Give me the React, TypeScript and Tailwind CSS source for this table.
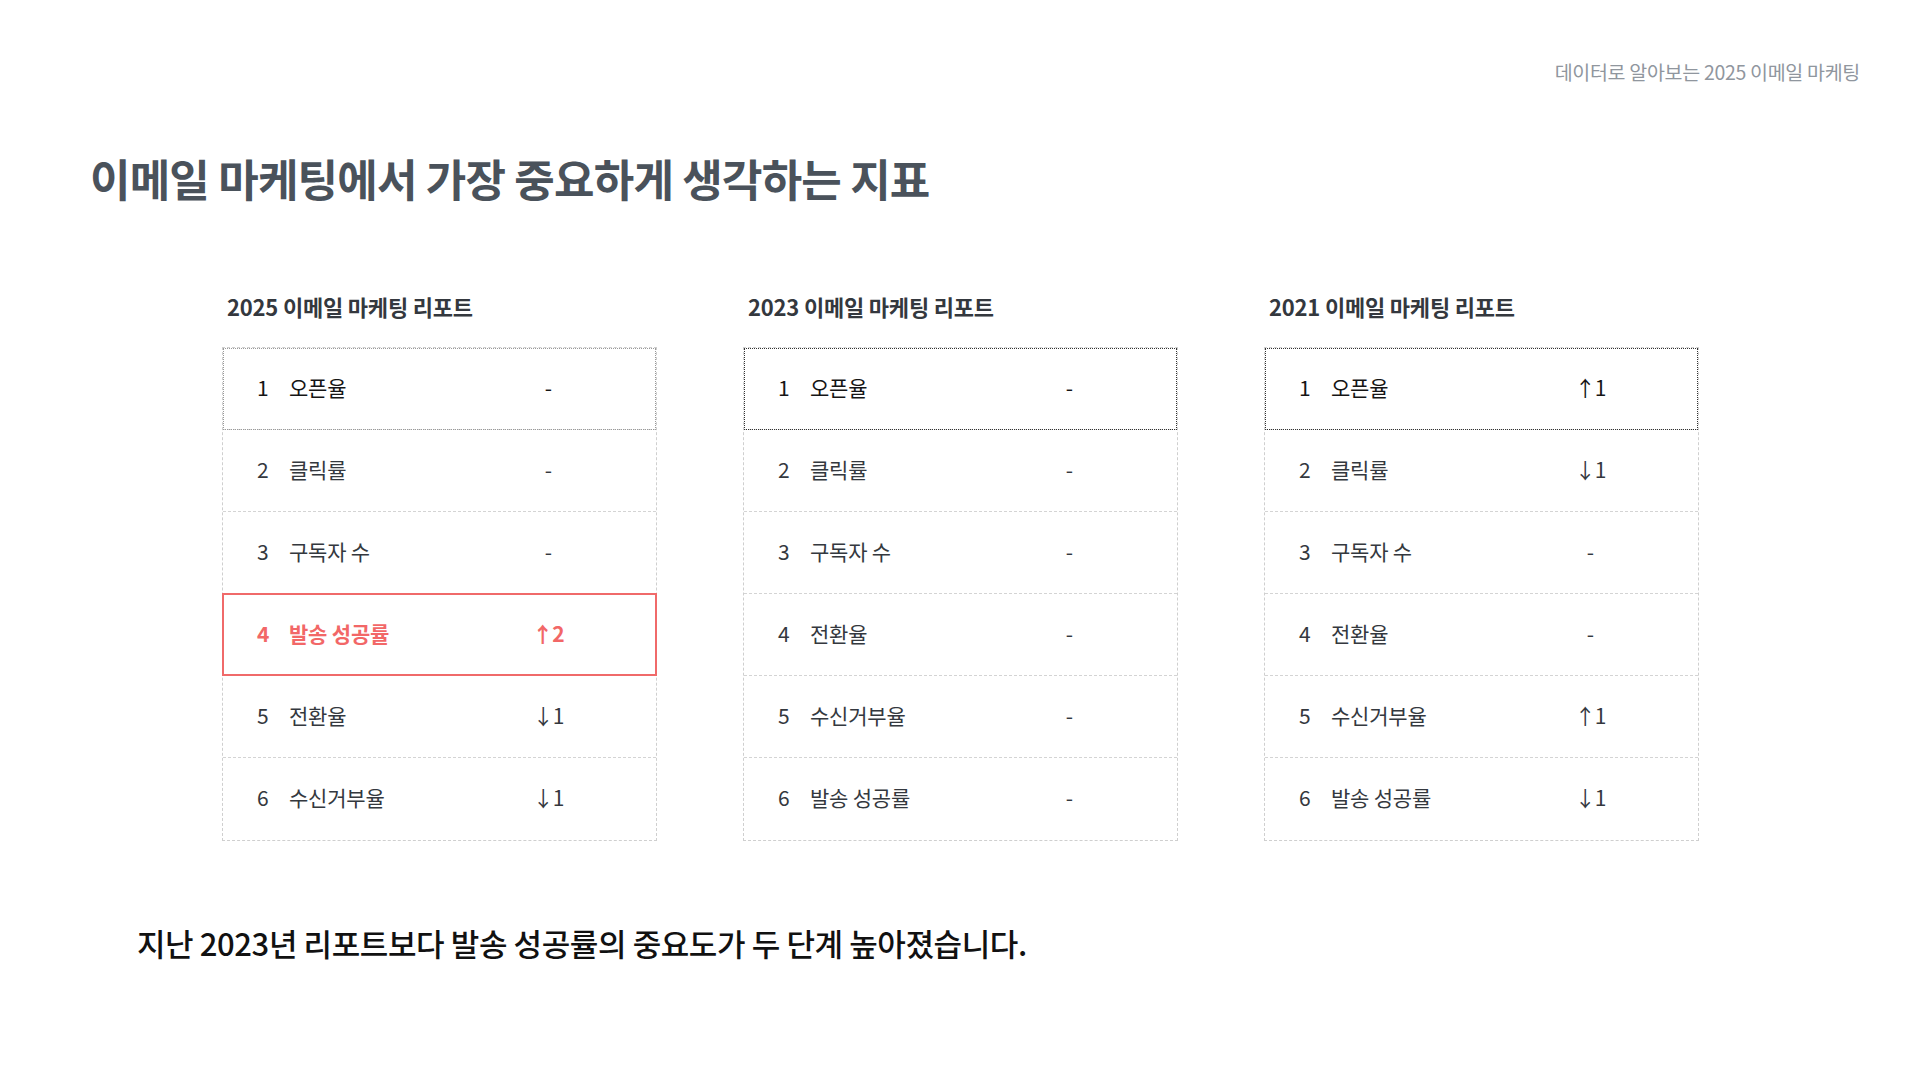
import React from "react";

type Row = { n: number; label: string; trend: string; hl?: boolean };

const tables: { title: string; firstOutline: string; rows: Row[] }[] = [
  {
    title: "2025 이메일 마케팅 리포트",
    firstOutline: "outline-[#9a9a9a]",
    rows: [
      { n: 1, label: "오픈율", trend: "-" },
      { n: 2, label: "클릭률", trend: "-" },
      { n: 3, label: "구독자 수", trend: "-" },
      { n: 4, label: "발송 성공률", trend: "↑2", hl: true },
      { n: 5, label: "전환율", trend: "↓1" },
      { n: 6, label: "수신거부율", trend: "↓1" },
    ],
  },
  {
    title: "2023 이메일 마케팅 리포트",
    firstOutline: "outline-[#333333]",
    rows: [
      { n: 1, label: "오픈율", trend: "-" },
      { n: 2, label: "클릭률", trend: "-" },
      { n: 3, label: "구독자 수", trend: "-" },
      { n: 4, label: "전환율", trend: "-" },
      { n: 5, label: "수신거부율", trend: "-" },
      { n: 6, label: "발송 성공률", trend: "-" },
    ],
  },
  {
    title: "2021 이메일 마케팅 리포트",
    firstOutline: "outline-[#333333]",
    rows: [
      { n: 1, label: "오픈율", trend: "↑1" },
      { n: 2, label: "클릭률", trend: "↓1" },
      { n: 3, label: "구독자 수", trend: "-" },
      { n: 4, label: "전환율", trend: "-" },
      { n: 5, label: "수신거부율", trend: "↑1" },
      { n: 6, label: "발송 성공률", trend: "↓1" },
    ],
  },
];

function Table({ t }: { t: (typeof tables)[number] }) {
  return (
    <div className="w-[435px]">
      <div className="pl-[5px] text-[22px] leading-[28px] font-bold tracking-[-0.2px] text-[#34383e]">
        {t.title}
      </div>
      <div className="mt-[27px] border border-dashed border-[#cfcfcf]">
        {t.rows.map((r, i) => (
          <div
            key={r.n}
            className={
              "relative flex h-[82px] items-center pl-[34px] pb-[2px] text-[21px] tracking-[-0.2px] " +
              (i < t.rows.length - 1 ? "border-b border-dashed border-[#d4d4d4] " : "") +
              (i === 0 ? "outline-1 outline-dotted -outline-offset-1 " + t.firstOutline + " " : "") +
              (r.hl ? "font-bold text-[#f26767]" : i === 0 ? "text-[#151515]" : "text-[#34383e]")
            }
          >
            <span className="w-[32px]">{r.n}</span>
            <span className="w-[216px]">{r.label}</span>
            <span className="w-[86px] text-center tracking-[-1px]">{r.trend}</span>
            {r.hl && (
              <div className="pointer-events-none absolute -left-px -right-px -top-px -bottom-px border-2 border-[#f06a6a]" />
            )}
          </div>
        ))}
      </div>
    </div>
  );
}

export default function App() {
  return (
    <div
      className="relative h-[1080px] w-[1920px] overflow-hidden bg-white"
      style={{ fontFamily: '"Noto Sans CJK KR", "Noto Sans", sans-serif' }}
    >
      <div className="flex justify-end pr-[60px] pt-[60px]">
        <span className="text-[19.5px] leading-[24px] tracking-[-0.3px] text-[#90969e]">
          데이터로 알아보는 2025 이메일 마케팅
        </span>
      </div>
      <h1 className="mt-[70px] pl-[90px] text-[44px] leading-[48px] font-bold tracking-[-0.8px] text-[#4a525b]">
        이메일 마케팅에서 가장 중요하게 생각하는 지표
      </h1>
      <div className="mt-[90px] flex gap-[86px] pl-[222px]">
        {tables.map((t) => (
          <Table key={t.title} t={t} />
        ))}
      </div>
      <p className="mt-[82px] pl-[137px] text-[31px] leading-[40px] font-medium tracking-[-0.4px] text-[#111111]">
        지난 2023년 리포트보다 발송 성공률의 중요도가 두 단계 높아졌습니다.
      </p>
    </div>
  );
}
